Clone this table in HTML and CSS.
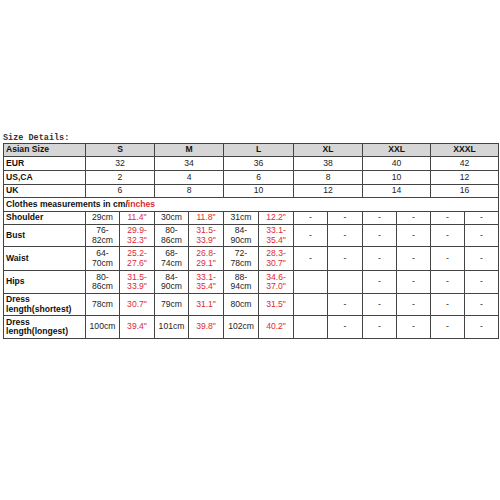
FILE: index.html
```html
<!DOCTYPE html>
<html>
<head>
<meta charset="utf-8">
<link rel="stylesheet" href="styles.css">
</head>
<body>
<div class="page">
  <div class="caption">Size Details:</div>
  <table class="sizes">
    <colgroup>
      <col class="w82">
      <col class="w34"><col class="w35">
      <col class="w34"><col class="w35">
      <col class="w35"><col class="w35">
      <col class="w34"><col class="w35">
      <col class="w34"><col class="w34">
      <col class="w34"><col class="w34">
    </colgroup>
    <tr class="head h13">
      <td class="label">Asian Size</td>
      <td colspan="2">S</td><td colspan="2">M</td><td colspan="2">L</td>
      <td colspan="2">XL</td><td colspan="2">XXL</td><td colspan="2">XXXL</td>
    </tr>
    <tr class="h14">
      <td class="label">EUR</td>
      <td colspan="2">32</td><td colspan="2">34</td><td colspan="2">36</td>
      <td colspan="2">38</td><td colspan="2">40</td><td colspan="2">42</td>
    </tr>
    <tr class="h14">
      <td class="label">US,CA</td>
      <td colspan="2">2</td><td colspan="2">4</td><td colspan="2">6</td>
      <td colspan="2">8</td><td colspan="2">10</td><td colspan="2">12</td>
    </tr>
    <tr class="h13">
      <td class="label">UK</td>
      <td colspan="2">6</td><td colspan="2">8</td><td colspan="2">10</td>
      <td colspan="2">12</td><td colspan="2">14</td><td colspan="2">16</td>
    </tr>
    <tr class="h14">
      <td class="label" colspan="13">Clothes measurements in cm/<span class="red">inches</span></td>
    </tr>
    <tr class="h13">
      <td class="label">Shoulder</td>
      <td>29cm</td><td class="red">11.4"</td>
      <td>30cm</td><td class="red">11.8"</td>
      <td>31cm</td><td class="red">12.2"</td>
      <td>-</td><td>-</td><td>-</td><td>-</td><td>-</td><td>-</td>
    </tr>
    <tr class="h22">
      <td class="label">Bust</td>
      <td>76-<br>82cm</td><td class="red">29.9-<br>32.3"</td>
      <td>80-<br>86cm</td><td class="red">31.5-<br>33.9"</td>
      <td>84-<br>90cm</td><td class="red">33.1-<br>35.4"</td>
      <td>-</td><td>-</td><td>-</td><td>-</td><td>-</td><td>-</td>
    </tr>
    <tr class="h24">
      <td class="label">Waist</td>
      <td>64-<br>70cm</td><td class="red">25.2-<br>27.6"</td>
      <td>68-<br>74cm</td><td class="red">26.8-<br>29.1"</td>
      <td>72-<br>78cm</td><td class="red">28.3-<br>30.7"</td>
      <td>-</td><td>-</td><td>-</td><td>-</td><td>-</td><td>-</td>
    </tr>
    <tr class="h23">
      <td class="label">Hips</td>
      <td>80-<br>86cm</td><td class="red">31.5-<br>33.9"</td>
      <td>84-<br>90cm</td><td class="red">33.1-<br>35.4"</td>
      <td>88-<br>94cm</td><td class="red">34.6-<br>37.0"</td>
      <td></td><td></td><td>-</td><td>-</td><td>-</td><td>-</td>
    </tr>
    <tr class="h22">
      <td class="label">Dress<br>length(shortest)</td>
      <td>78cm</td><td class="red">30.7"</td>
      <td>79cm</td><td class="red">31.1"</td>
      <td>80cm</td><td class="red">31.5"</td>
      <td></td><td>-</td><td>-</td><td>-</td><td>-</td><td>-</td>
    </tr>
    <tr class="h23">
      <td class="label">Dress<br>length(longest)</td>
      <td>100cm</td><td class="red">39.4"</td>
      <td>101cm</td><td class="red">39.8"</td>
      <td>102cm</td><td class="red">40.2"</td>
      <td></td><td>-</td><td>-</td><td>-</td><td>-</td><td>-</td>
    </tr>
  </table>
</div>
</body>
</html>
```

FILE: styles.css
```css
html, body {
  margin: 0;
  padding: 0;
  background: #ffffff;
}

.page {
  padding: 133px 0 0 3px;
}

.caption {
  font-family: "Liberation Mono", monospace;
  font-weight: bold;
  font-size: 8.5px;
  line-height: 10px;
  color: #333333;
  height: 10px;
}

.sizes {
  border-collapse: collapse;
  table-layout: fixed;
  width: 495px;
  font-family: "Liberation Sans", Arial, sans-serif;
  font-size: 8.6px;
  color: #222222;
}

.w82 { width: 82px; }
.w34 { width: 34px; }
.w35 { width: 35px; }

.sizes td {
  border: 1px solid #444444;
  padding: 0 1px;
  text-align: center;
  vertical-align: middle;
  line-height: 9.5px;
  white-space: nowrap;
  overflow: hidden;
}

.sizes td.label {
  text-align: left;
  font-weight: bold;
  color: #111111;
  padding-left: 2px;
}

.head td {
  background: #d6d6d6;
  font-weight: bold;
  color: #111111;
}

.red {
  color: #dd2a36;
}

.h13 { height: 13px; }
.h14 { height: 14px; }
.h22 { height: 22px; }
.h23 { height: 23px; }
.h24 { height: 24px; }
```
